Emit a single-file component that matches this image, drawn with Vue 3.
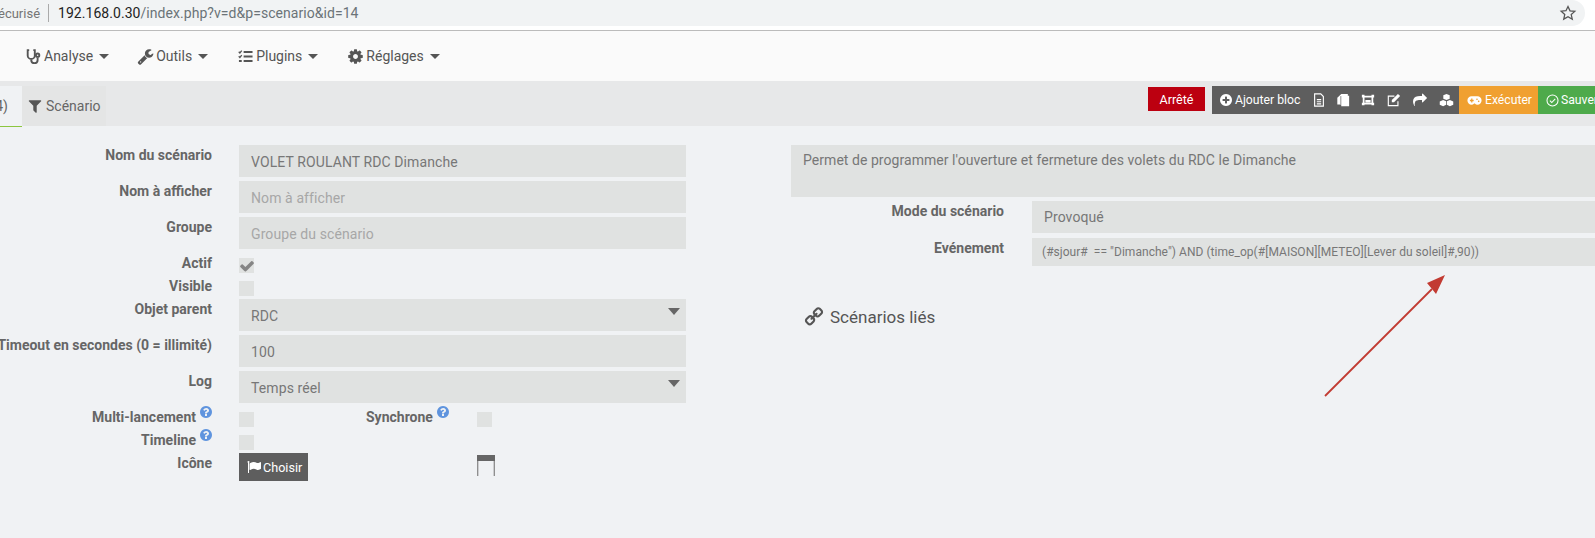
<script setup>
const P = {
  filter: 'M1595 295q17 41-14 70l-493 493v742q0 42-39 59-13 5-25 5-27 0-45-19l-256-256q-19-19-19-45v-486l-493-493q-31-29-14-70 17-39 59-39h1280q42 0 59 39z',
  plus: 'M1344 960v-128q0-26-19-45t-45-19h-256v-256q0-26-19-45t-45-19h-128q-26 0-45 19t-19 45v256h-256q-26 0-45 19t-19 45v128q0 26 19 45t45 19h256v256q0 26 19 45t45 19h128q26 0 45-19t19-45v-256h256q26 0 45-19t19-45zm320-64q0 209-103 385.5t-279.5 279.5-385.5 103-385.5-103-279.5-279.5-103-385.5 103-385.5 279.5-279.5 385.5-103 385.5 103 279.5 279.5 103 385.5z',
  help: 'M1024 1376v-192q0-14-9-23t-23-9h-192q-14 0-23 9t-9 23v192q0 14 9 23t23 9h192q14 0 23-9t9-23zm256-672q0-88-55.5-163t-138.5-116-170-41q-243 0-371 213-15 24 8 42l132 100q7 6 19 6 16 0 25-12 53-68 86-92 34-24 86-24 48 0 85.5 26t37.5 59q0 38-20 61t-68 45q-63 28-115.5 86.5t-52.5 125.5v36q0 14 9 23t23 9h192q14 0 23-9t9-23q0-19 21.5-49.5t54.5-49.5q32-18 49-28.5t46-35 44.5-48 28-60.5 12.5-81zm384 192q0 209-103 385.5t-279.5 279.5-385.5 103-385.5-103-279.5-279.5-103-385.5 103-385.5 279.5-279.5 385.5-103 385.5 103 279.5 279.5 103 385.5z',
  check: 'M1671 566q0 40-28 68l-724 724-136 136q-28 28-68 28t-68-28l-136-136-362-362q-28-28-28-68t28-68l136-136q28-28 68-28t68 28l294 295 656-657q28-28 68-28t68 28l136 136q28 28 28 68z',
  share: 'M1792 640q0 26-19 45l-512 512q-19 19-45 19t-45-19-19-45v-256h-224q-98 0-175.5 6t-154 21.5-133 42.5-105.5 69.5-79 101.5-47.5 139-17 181.5q0 55 5 123 0 6 2.5 23.5t2.5 26.5q0 15-8.5 25t-23.5 10q-16 0-28-17-7-9-13-22t-13.5-30-10.5-24q-127-285-127-451 0-199 53-333 162-403 875-403h224v-256q0-26 19-45t45-19 45 19l512 512q19 19 19 45z',
  flag: 'M320 256q0 72-64 110v1266q0 13-9.5 22.5t-22.5 9.5h-64q-13 0-22.5-9.5t-9.5-22.5v-1266q-64-38-64-110 0-53 37.5-90.5t90.5-37.5 90.5 37.5 37.5 90.5zm1472 64v763q0 25-12.5 38.5t-39.5 27.5q-215 116-369 116-61 0-123.5-22t-108.5-48-115.5-48-142.5-22q-192 0-464 146-17 9-33 9-26 0-45-19t-19-45v-742q0-32 31-55 21-14 79-43 236-120 421-120 107 0 200 29t219 88q38 19 88 19 54 0 117.5-21t110-47 88-47 54.5-21q26 0 45 19t19 45z',
  wrench: 'M448 1472q0-26-19-45t-45-19-45 19-19 45 19 45 45 19 45-19 19-45zm644-420l-682 682q-37 37-90 37-52 0-91-37l-106-108q-38-36-38-90 0-53 38-91l681-681q39 98 114.5 173.5t173.5 114.5zm634-435q0 39-23 106-47 134-164.5 217.5t-258.5 83.5q-185 0-316.5-131.5t-131.5-316.5 131.5-316.5 316.5-131.5q58 0 121.5 16.5t107.5 46.5q16 11 16 28t-16 28l-293 169v224l193 107q5-3 79-48.5t135.5-81 70.5-35.5q15 0 23.5 10t8.5 25z',
  cog: 'M1152 896q0-106-75-181t-181-75-181 75-75 181 75 181 181 75 181-75 75-181zm512-109v222q0 12-8 23t-20 13l-185 28q-19 54-39 91 35 50 107 138 10 12 10 25t-9 23q-27 37-99 108t-94 71q-12 0-26-9l-138-108q-44 23-91 38-16 136-29 186-7 28-36 28h-222q-14 0-24.5-8.5t-11.5-21.5l-28-184q-49-16-90-37l-141 107q-10 9-25 9-14 0-25-11-126-114-165-168-7-10-7-23 0-12 8-23 15-21 51-66.5t54-70.5q-27-50-41-99l-183-27q-13-2-21-12.5t-8-23.5v-222q0-12 8-23t19-13l186-28q14-46 39-92-40-57-107-138-10-12-10-24 0-10 9-23 26-36 98.5-107.5t94.5-71.5q13 0 26 10l138 107q44-23 91-38 16-136 29-186 7-28 36-28h222q14 0 24.5 8.5t11.5 21.5l28 184q49 16 90 37l142-107q9-9 24-9 13 0 25 10 129 119 165 170 7 8 7 22 0 12-8 23-15 21-51 66.5t-54 70.5q26 50 41 98l183 28q13 2 21 12.5t8 23.5z',
  link: 'M1520 1216q0-40-28-68l-208-208q-28-28-68-28-42 0-72 32 3 3 19 18.5t21.5 21.5 15 19 13 25.5 3.5 27.5q0 40-28 68t-68 28q-15 0-27.5-3.5t-25.5-13-19-15-21.5-21.5-18.5-19q-33 31-33 73 0 40 28 68l206 207q27 27 68 27 40 0 68-26l147-146q28-28 28-67zm-703-705q0-40-28-68l-206-207q-28-28-68-28-39 0-68 27l-147 146q-28 28-28 67 0 40 28 68l208 208q27 27 68 27 42 0 72-31-3-3-19-18.5t-21.5-21.5-15-19-13-25.5-3.5-27.5q0-40 28-68t68-28q15 0 27.5 3.5t25.5 13 19 15 21.5 21.5 18.5 19q33-31 33-73zm895 705q0 120-85 203l-147 146q-83 83-203 83-121 0-204-85l-206-207q-83-83-83-203 0-123 88-209l-88-88q-86 88-208 88-120 0-204-84l-208-208q-84-84-84-204t85-203l147-146q83-83 203-83 121 0 204 85l206 207q83 83 83 203 0 123-88 209l88 88q86-88 208-88 120 0 204 84l208 208q84 84 84 204z'
}
</script>

<template>
  <div class="page">
    <header class="chrome">
      <div class="address">
        <span class="secure">écurisé</span>
        <span class="sep"></span>
        <span class="url"><b>192.168.0.30</b>/index.php?v=d&amp;p=scenario&amp;id=14</span>
        <svg class="star" viewBox="0 0 24 24"><path d="M12 3.2l2.7 5.9 6.4.7-4.8 4.3 1.4 6.3L12 17l-5.7 3.2 1.4-6.3-4.8-4.3 6.4-.7z" /></svg>
      </div>
    </header>

    <nav class="navbar">
      <a class="nav-item n1">
        <svg class="ni hand" viewBox="0 0 16 16"><path class="stroke" d="M3.4 1.200H1.800v5.600a3.800 3.800 0 0 0 7.600 0V1.200H7.800M5.600 10.600v1.200a3.400 3.400 0 0 0 6.800 0V9" /><circle cx="12.400" cy="6.600" r="1.800" class="stroke" /></svg>
        <span>Analyse</span><i class="caret"></i>
      </a>
      <a class="nav-item n2">
        <svg class="ni" viewBox="0 0 1792 1792"><path :d="P.wrench" /></svg>
        <span>Outils</span><i class="caret"></i>
      </a>
      <a class="nav-item n3">
        <svg class="ni hand" viewBox="0 0 16 16"><path class="stroke thin" d="M.8 3l1.200 1.200L4 1.800M.8 7.800L2 9l2-2.400" /><path class="stroke bars" d="M6 3.200h9.500M6 8h9.500M6 12.800h9.500M1 12.800h3" /></svg>
        <span>Plugins</span><i class="caret"></i>
      </a>
      <a class="nav-item n4">
        <svg class="ni" viewBox="0 0 1792 1792"><path :d="P.cog" /></svg>
        <span>Réglages</span><i class="caret"></i>
      </a>
    </nav>

    <div class="tabbar">
      <div class="tabs">
        <span class="tab active">4)</span>
        <span class="tab">
          <svg class="ti" viewBox="0 0 1792 1792"><path :d="P.filter" /></svg>
          Scénario
        </span>
      </div>
      <div class="actions">
        <span class="status">Arrêté</span>
        <div class="toolbar">
          <span class="btn dark first">
            <svg class="bi fa" viewBox="0 0 1792 1792"><path :d="P.plus" /></svg>Ajouter bloc
          </span>
          <span class="tool t-file"><svg viewBox="0 0 14 16"><path class="wstroke" d="M2 1h7l3 3v11H2z" /><path class="wstroke" d="M4.500 7.500h5M4.500 10h5M4.500 12.500h5" /></svg></span>
          <span class="tool t-copy"><svg viewBox="0 0 16 16"><path class="wfill" d="M6 1h7.500v2H15v12H6v-2H1.500V5.500z" /><path d="M5.500 3.500v9.500" stroke="#5e5e5e" stroke-width=".8" /></svg></span>
          <span class="tool t-frame"><svg viewBox="0 0 16 16"><path class="wfill" fill-rule="evenodd" d="M1 2h3v1h8V2h3v3h-1v6h1v3h-3v-1H4v1H1v-3h1V5H1zM4 5v6h8V5z" /><rect class="wfill" x="5" y="8" width="6" height="3" /></svg></span>
          <span class="tool t-edit"><svg viewBox="0 0 16 16"><path class="wstroke" d="M12.500 9.500V14.500H1.500V3.500h7" /><path class="wfill" d="M5.500 8L12.500 1l2.500 2.500-7 7H5.500z" /></svg></span>
          <span class="tool t-share"><svg viewBox="0 0 1792 1792"><path class="wfill" :d="P.share" /></svg></span>
          <span class="tool t-cubes"><svg viewBox="0 0 16 16"><path class="wfill" d="M8 1l3.400 1.500v3.500L8 7.500 4.600 6V2.500zM4.400 7.500l3.200 1.400v3.700l-3.200 1.600L.8 12.600V9zM11.600 7.500L15.200 9v3.600l-3.600 1.600-3.200-1.600V8.900z" /></svg></span>
        </div>
        <span class="btn orange">
          <svg class="bi pad" viewBox="0 0 18 12"><path class="wfill" fill-rule="evenodd" d="M5.500 1h7a5 5 0 0 1 0 10 4 4 0 0 1-3-1.500h-1A4 4 0 0 1 5.500 11a5 5 0 0 1 0-10zM3.500 5v2h1.500v1.500h1.500V7H8V5H6.500V3.500H5V5zM12 3.500a1 1 0 1 0 0 2 1 1 0 0 0 0-2zM14 6a1 1 0 1 0 0 2 1 1 0 0 0 0-2z" /></svg>Exécuter
        </span>
        <span class="btn green">
          <svg class="bi" viewBox="0 0 16 16"><circle cx="8" cy="8" r="6.800" class="wstroke" /><path class="wstroke" d="M4.800 8.200l2.300 2.300 4.300-4.500" /></svg>Sauver
        </span>
      </div>
    </div>

    <main class="content">
      <section class="left">
        <div class="row tall"><label class="lab">Nom du scénario</label><div class="field">VOLET ROULANT RDC Dimanche</div></div>
        <div class="row tall"><label class="lab">Nom à afficher</label><div class="field ph">Nom à afficher</div></div>
        <div class="row tall"><label class="lab">Groupe</label><div class="field ph">Groupe du scénario</div></div>
        <div class="row short"><label class="lab">Actif</label><span class="cb"><svg viewBox="0 0 1792 1792"><path :d="P.check" /></svg></span></div>
        <div class="row short"><label class="lab">Visible</label><span class="cb"></span></div>
        <div class="row tall"><label class="lab">Objet parent</label><div class="field sel">RDC<i class="sel-caret"></i></div></div>
        <div class="row tall"><label class="lab">Timeout en secondes (0 = illimité)</label><div class="field">100</div></div>
        <div class="row tall"><label class="lab">Log</label><div class="field sel">Temps réel<i class="sel-caret"></i></div></div>
        <div class="row short">
          <label class="lab">Multi-lancement<svg class="help" viewBox="0 0 1792 1792"><path :d="P.help" /></svg></label>
          <span class="cb"></span>
          <label class="lab sync">Synchrone<svg class="help" viewBox="0 0 1792 1792"><path :d="P.help" /></svg></label>
          <span class="cb"></span>
        </div>
        <div class="row short"><label class="lab">Timeline<svg class="help" viewBox="0 0 1792 1792"><path :d="P.help" /></svg></label><span class="cb"></span></div>
        <div class="row icon-row">
          <label class="lab">Icône</label>
          <span class="choose"><svg viewBox="0 0 1792 1792"><path :d="P.flag" /></svg>Choisir</span>
          <svg class="shutter" viewBox="0 0 18 22"><rect x="0" y="0" width="18" height="6" fill="#666" /><path d="M.7 6v15M17.300 6v15" stroke="#8a8a8a" stroke-width="1.300" /></svg>
        </div>
      </section>

      <section class="right">
        <div class="desc">Permet de programmer l'ouverture et fermeture des volets du RDC le Dimanche</div>
        <div class="rrow mode"><label class="lab rlab">Mode du scénario</label><div class="field wide">Provoqué</div></div>
        <div class="rrow event"><label class="lab rlab">Evénement</label><div class="field wide expr">(#sjour#&nbsp; == "Dimanche") AND (time_op(#[MAISON][METEO][Lever du soleil]#,90))</div></div>
        <h3 class="linked"><svg viewBox="0 0 1792 1792"><path :d="P.link" /></svg>Scénarios liés</h3>
        <svg class="arrow" viewBox="0 0 130 130" aria-hidden="true">
          <path d="M5 126L112 19" stroke="#c23b32" stroke-width="1.800" fill="none" />
          <path d="M125 5L116 24 112 19 107 13z" fill="#c23b32" />
        </svg>
      </section>
    </main>
  </div>
</template>

<style>
html, body { margin: 0; background: #f0f2f4; }
</style>

<style scoped>
.page { width: 1595px; height: 538px; overflow: hidden; background: #f0f2f4; font-family: Roboto, "Liberation Sans", sans-serif; font-size: 14px; color: #666; position: relative; }

.chrome { height: 30px; background: #fff; border-bottom: 1px solid #bbb; }
.address { height: 26px; width: 1585px; background: #f1f3f4; border-radius: 0 13px 13px 0; display: flex; align-items: center; box-sizing: border-box; padding: 0 8px 0 0; font-size: 14px; color: #757575; }
.secure { margin-left: -2px; width: 41px; flex: none; white-space: nowrap; font-size: 13px; }
.sep { width: 1px; height: 18px; background: #aaa; margin-left: 9px; }
.url { margin-left: 9px; color: #6b7378; letter-spacing: .05px; }
.url b { font-weight: 400; color: #222; }
.star { width: 18px; height: 18px; margin-left: auto; fill: none; stroke: #555; stroke-width: 1.700; }

.navbar { height: 50px; background: #fafafa; display: flex; align-items: center; color: #555; }
.nav-item { display: flex; align-items: center; white-space: nowrap; }
.n1 { margin-left: 26px; }
.n2 { margin-left: 29px; }
.n3 { margin-left: 30px; }
.n4 { margin-left: 30px; }
.ni { width: 17px; height: 17px; margin: 0 2px 0 -1px; fill: #555; flex: none; }
.ni.hand { width: 15px; height: 15px; margin: 0 3px 0 0; }
.stroke { fill: none; stroke: #555; stroke-width: 2; }
.stroke.thin { stroke-width: 1.400; }
.stroke.bars { stroke-width: 1.900; }
.caret { width: 0; height: 0; border: 5px solid transparent; border-top-color: #555; border-bottom: 0; margin-left: 6px; }

.tabbar { height: 45px; background: #e7e8e9; display: flex; }
.tabs { display: flex; align-items: flex-end; width: 1148px; flex: none; }
.tab { height: 40px; display: flex; align-items: center; background: #e4e5e5; padding: 0 5px; box-sizing: border-box; width: 84px; color: #666; white-space: nowrap; }
.tab.active { width: 22px; background: #f0f2f4; box-shadow: 0 1px 0 #8cc63f; justify-content: flex-end; padding: 0 14px 0 0; }
.ti { width: 16px; height: 16px; fill: #555; margin-right: 3px; }

.actions { display: flex; align-items: flex-start; padding-top: 5px; font-size: 13px; flex: none; }
.status { width: 57px; height: 24px; margin: 1px 7px 0 0; background: #bc0010; color: #fff; display: flex; align-items: center; justify-content: center; font-size: 12.500px; }
.toolbar { display: flex; width: 247px; height: 28px; background: #5e5e5e; color: #fff; align-items: center; }
.btn { height: 28px; display: flex; align-items: center; font-size: 12.200px; white-space: nowrap; box-sizing: border-box; color: #fff; }
.btn.first { padding-left: 7px; width: 94px; flex: none; }
.orange { background: #f0a030; width: 79px; padding-left: 8px; }
.green { background: #4eaa4b; width: 57px; padding-left: 8px; overflow: hidden; }
.bi { width: 13px; height: 13px; margin-right: 2px; fill: #fff; flex: none; }
.bi.fa { width: 14px; height: 14px; }
.bi.pad { width: 15px; height: 11px; margin-right: 3px; }
.wfill { fill: #fff; }
.wstroke { fill: none; stroke: #fff; stroke-width: 1.300; }
.tool { display: flex; align-items: center; justify-content: center; flex: none; }
.tool svg { width: 14px; height: 14px; }
.t-file { width: 25px; }
.t-copy { width: 24.500px; }
.t-frame { width: 25px; }
.t-edit { width: 26px; }
.t-share { width: 27px; }
.t-cubes { width: 26px; }
.t-cubes svg { width: 15px; height: 15px; }

.content { display: flex; padding-top: 19px; }
.left { width: 686px; flex: none; }
.row { display: flex; }
.tall { height: 32px; margin-bottom: 4px; }
.short { height: 23px; }
.icon-row { height: 28px; }
.lab { width: 212px; flex: none; margin-right: 27px; display: flex; justify-content: flex-end; align-items: flex-start; font-weight: 700; line-height: 20px; color: #666; white-space: nowrap; }
.field { flex: 1; height: 32px; background: #e0e2e1; color: #777; padding: 1px 12px 0; box-sizing: border-box; display: flex; align-items: center; position: relative; letter-spacing: .1px; }
.ph { color: #a7a7a7; }
.sel-caret { position: absolute; right: 6px; top: 9px; border: 6px solid transparent; border-top: 7px solid #666; border-bottom: 0; }
.cb { width: 15px; height: 15px; margin-top: 5px; background: #e0e2e1; display: flex; align-items: center; justify-content: center; flex: none; }
.cb svg { width: 16px; height: 16px; flex: none; fill: #858585; }
.help { width: 14px; height: 14px; fill: #5f94de; margin: -2px -1px 0 3px; flex: none; }
.lab.sync { width: auto; margin-left: 112px; margin-right: 28px; }
.choose { width: 69px; height: 28px; background: #5e5e5e; color: #fff; display: flex; align-items: center; padding-left: 8px; box-sizing: border-box; font-size: 12.600px; flex: none; }
.choose svg { width: 14px; height: 14px; fill: #fff; margin-right: 2px; flex: none; }
.shutter { width: 18px; height: 22px; margin: 2px 0 0 169px; }

.right { flex: 1; padding-left: 105px; position: relative; }
.desc { height: 52px; background: #e0e2e1; padding: 5px 12px; box-sizing: border-box; color: #777; line-height: 20px; font-size: 14px; letter-spacing: .05px; white-space: nowrap; }
.rrow { display: flex; }
.rlab { width: 213px; margin-right: 28px; }
.mode { margin-top: 4px; height: 32px; }
.mode .wide { padding-top: 0; }
.event { margin-top: 5px; height: 28px; }
.wide { height: 32px; }
.event .wide { height: 28px; padding: 0 10px; font-size: 12px; letter-spacing: .04px; white-space: nowrap; }
.linked { margin: 39px 0 0 13px; font-weight: 400; font-size: 17px; line-height: 24px; color: #555; display: flex; align-items: center; }
.linked svg { width: 20px; height: 20px; fill: #555; margin-right: 6px; transform: scaleX(-1); }
.arrow { position: absolute; left: 634px; top: 125px; width: 130px; height: 130px; }
</style>
